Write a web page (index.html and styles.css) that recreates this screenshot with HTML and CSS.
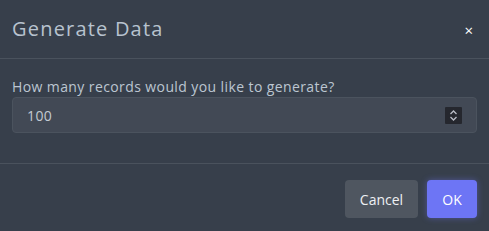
FILE: index.html
```html
<!DOCTYPE html>
<html>
<head>
<meta charset="utf-8">
<link rel="stylesheet" href="styles.css">
</head>
<body>
<div class="modal">
  <div class="header">
    <div class="title">Generate Data</div>
    <div class="close">&#215;</div>
  </div>
  <div class="body">
    <label class="label">How many records would you like to generate?</label>
    <div class="input">
      <span class="value">100</span>
      <span class="spin">
        <svg width="17" height="17" viewBox="0 0 17 17"><path d="M5.5 7 L8.5 4 L11.5 7 M5.5 10 L8.5 13 L11.5 10" fill="none" stroke="#b9bcc6" stroke-width="1.3"/></svg>
      </span>
    </div>
  </div>
  <div class="footer">
    <button class="btn cancel">Cancel</button>
    <button class="btn ok">OK</button>
  </div>
</div>
</body>
</html>
```
FILE: styles.css
```css
html, body { margin: 0; padding: 0; background: #373f4b; }
body { width: 489px; height: 231px; overflow: hidden; font-family: "Open Sans", sans-serif; }
.modal { display: flex; flex-direction: column; height: 231px; }
.header { height: 59px; box-sizing: border-box; border-bottom: 1px solid #4a525d; display: flex; align-items: center; justify-content: space-between; padding: 0 16px 0 12px; }
.title { font-size: 20px; letter-spacing: 1.2px; color: #b8c3cf; margin-top: -2px; }
.close { color: #ffffff; font-size: 15px; margin-top: 2px; }
.body { padding: 18px 12px 0 12px; height: 105px; box-sizing: border-box; border-bottom: 1px solid #4a525d; }
.label { display: block; font-size: 14px; letter-spacing: 0.4px; color: #bcc6d1; line-height: 20px; }
.input { margin-top: 0; height: 36px; box-sizing: border-box; background: #424955; border: 1px solid #4b535e; border-radius: 4px; display: flex; align-items: center; justify-content: space-between; padding: 0 14px 0 14px; }
.value { font-size: 14px; letter-spacing: 0.4px; color: #c3cad3; }
.spin { width: 17px; height: 17px; background: #25272e; display: flex; border-radius: 1px; }
.footer { display: flex; justify-content: flex-end; gap: 9px; padding: 16px 12px 0 0; }
.btn { height: 38px; border: none; border-radius: 4px; font-family: "Open Sans", sans-serif; font-size: 14px; color: #ffffff; padding: 0; }
.cancel { width: 73px; background: #4f5660; color: #eef0f3; }
.ok { width: 50px; background: #6d75f5; box-shadow: 0 0 6px rgba(110,118,245,0.45); }
```
